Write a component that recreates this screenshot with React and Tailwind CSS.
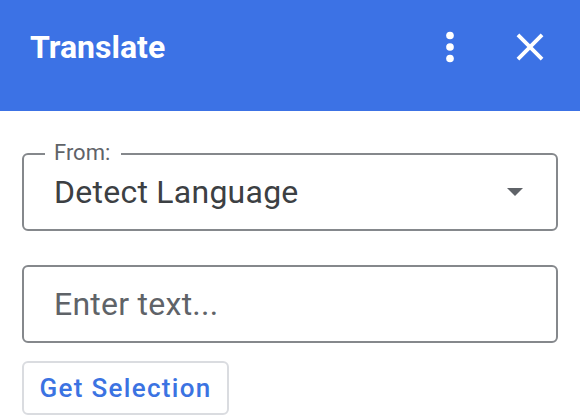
import React from 'react';

function MoreIcon() {
  return (
    <svg width="46" height="46" viewBox="0 0 24 24" fill="#ffffff">
      <circle cx="12" cy="6" r="2" />
      <circle cx="12" cy="12" r="2" />
      <circle cx="12" cy="18" r="2" />
    </svg>
  );
}

function CloseIcon() {
  return (
    <svg width="46" height="46" viewBox="0 0 24 24" fill="#ffffff">
      <path d="M19 6.41L17.59 5 12 10.59 6.41 5 5 6.41 10.59 12 5 17.59 6.41 19 12 13.41 17.59 19 19 17.59 13.41 12z" />
    </svg>
  );
}

export default function App() {
  return (
    <div className="w-[580px] h-[418px] bg-white overflow-hidden" style={{ fontFamily: 'Roboto, "Noto Sans", sans-serif' }}>
      <header className="h-[111px] bg-[#3c72e5] flex items-center pl-[30px] pr-[27px] pb-[18px]">
        <h1 className="text-[32px] font-bold leading-none text-white">Translate</h1>
        <div className="ml-auto flex items-center gap-[34px]">
          <button type="button" className="block">
            <MoreIcon />
          </button>
          <button type="button" className="block">
            <CloseIcon />
          </button>
        </div>
      </header>

      <main className="px-[22px]">
        <div className="relative mt-[42px] h-[78px] border-2 border-[#85888c] rounded-[6px] flex items-center justify-between pl-[30px] pr-[33px]">
          <span className="absolute top-[-13px] left-[21px] pl-[9px] pr-[11px] bg-white text-[22px] leading-none text-[#5f6368]">
            From:
          </span>
          <span className="text-[32px] leading-none tracking-[0.25px] text-[#3c4043]">Detect Language</span>
          <svg width="16" height="8" viewBox="0 0 16 8" fill="#5f6368">
            <path d="M0 0 L16 0 L8 8 Z" />
          </svg>
        </div>

        <div className="mt-[34px] h-[78px] border-2 border-[#85888c] rounded-[6px] flex items-center">
          <input
            type="text"
            placeholder="Enter text..."
            className="w-full h-full pl-[30px] pr-4 bg-transparent outline-none text-[32px] tracking-[0.25px] text-[#3c4043] placeholder:text-[#5f6368]"
          />
        </div>

        <button
          type="button"
          className="mt-[18px] h-[54px] w-[207px] border-2 border-[#dadce0] rounded-[6px] text-[26px] font-medium tracking-[1.3px] text-[#3b73e2] leading-none"
        >
          Get Selection
        </button>
      </main>
    </div>
  );
}
